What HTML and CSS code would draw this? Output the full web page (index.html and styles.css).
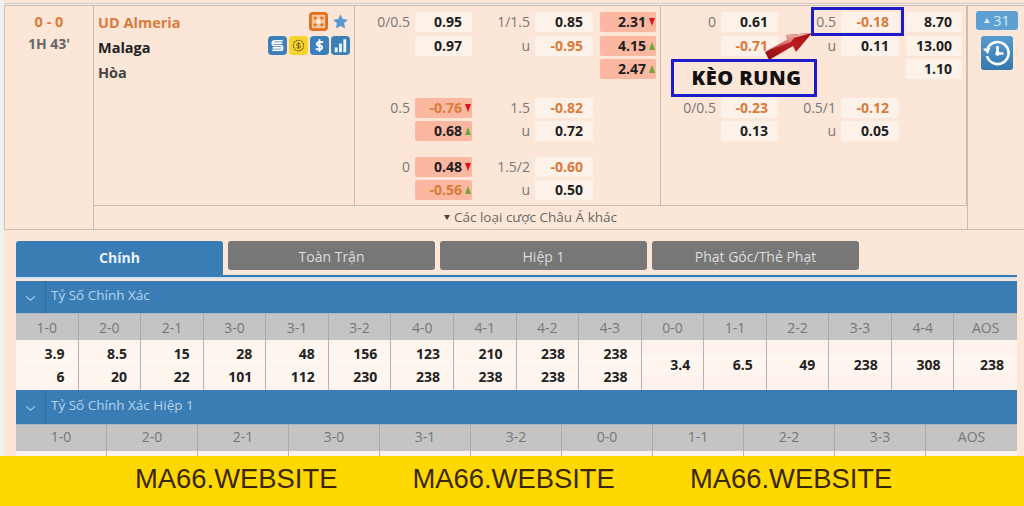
FILE: index.html
```html
<!DOCTYPE html>
<html lang="vi">
<head>
<meta charset="utf-8">
<title>Kèo rung</title>
<link rel="stylesheet" href="styles.css">
</head>
<body>
<div class="page">
  <div class="topstrip"></div>
  <section class="match">
    <div class="score"><div class="goals">0 - 0</div><div class="clock">1H 43'</div></div>
    <div class="body">
      <div class="markets">
        <div class="teams">
          <div class="team home">UD Almeria</div>
          <div class="team">Malaga</div>
          <div class="team draw">Hòa</div>
          <div class="iconrow first">
            <svg class="ic" viewBox="0 0 20 20"><rect x="1.5" y="1.5" width="17" height="17" rx="2.5" fill="#f6c79f" stroke="#e2701f" stroke-width="3"/><path d="M5 5h3v3H5zM12 5h3v3h-3zM5 12h3v3H5zM12 12h3v3h-3z" fill="#e2701f"/><path d="M8 8l4 4M12 8l-4 4" stroke="#fff3e6" stroke-width="1.8"/></svg>
            <svg class="star" viewBox="0 0 20 20"><path d="M10 1.5l2.6 5.7 6.200.7-4.600 4.200 1.300 6.100L10 15.200l-5.500 3 1.300-6.100L1.200 7.900l6.200-.7z" fill="#5a9ad2"/></svg>
          </div>
          <div class="iconrow second">
            <svg class="ic" viewBox="0 0 20 20"><rect width="20" height="20" rx="4" fill="#3b80b8"/><path d="M15.5 5H7a2.500 2.500 0 0 0 0 5h6a2.500 2.500 0 0 1 0 5H4.500M5 7.500h10M5 12.500h10" fill="none" stroke="#fff" stroke-width="1.7"/></svg>
            <svg class="ic" viewBox="0 0 20 20"><rect width="20" height="20" rx="4" fill="#f6d32d"/><circle cx="10" cy="10" r="5.5" fill="none" stroke="#6b5a10" stroke-width="1.1" stroke-dasharray="2 .8"/><path d="M12 8H9a1 1 0 0 0 0 2.200h2a1 1 0 0 1 0 2.200H8M10 6.500v7" fill="none" stroke="#6b5a10" stroke-width=".9"/></svg>
            <svg class="ic" viewBox="0 0 20 20"><rect width="20" height="20" rx="4" fill="#3b80b8"/><path d="M14 6.400H8.600a2 2 0 0 0 0 3.800h2.800a2 2 0 0 1 0 3.800H6M10 3.500v13" fill="none" stroke="#fff" stroke-width="2"/></svg>
            <svg class="ic" viewBox="0 0 20 20"><rect width="20" height="20" rx="4" fill="#3b80b8"/><path d="M4 12h3v5H4zM8.500 8h3v9h-3zM13 3.500h3V17h-3z" fill="#fff" opacity=".92"/></svg>
          </div>
        </div>
        <div class="panel">
          <div class="group g1">
            <span class="lb">0/0.5</span><span class="v">0.95</span><span class="lb">1/1.5</span><span class="v">0.85</span><span class="v x hot">2.31<i class="dn"></i></span>
            <span class="lb"></span><span class="v">0.97</span><span class="lb">u</span><span class="v neg">-0.95</span><span class="v x hot">4.15<i class="up"></i></span>
            <span class="lb"></span><span class="v none"></span><span class="lb"></span><span class="v none"></span><span class="v x hot">2.47<i class="up"></i></span>
          </div>
          <div class="group g2">
            <span class="lb">0.5</span><span class="v neg hot">-0.76<i class="dn"></i></span><span class="lb">1.5</span><span class="v neg">-0.82</span><span class="v x none"></span>
            <span class="lb"></span><span class="v hot">0.68<i class="up"></i></span><span class="lb">u</span><span class="v">0.72</span><span class="v x none"></span>
          </div>
          <div class="group">
            <span class="lb">0</span><span class="v hot">0.48<i class="dn"></i></span><span class="lb">1.5/2</span><span class="v neg">-0.60</span><span class="v x none"></span>
            <span class="lb"></span><span class="v neg hot">-0.56<i class="up"></i></span><span class="lb">u</span><span class="v">0.50</span><span class="v x none"></span>
          </div>
        </div>
        <div class="panel">
          <div class="group g1">
            <span class="lb">0</span><span class="v">0.61</span><span class="lb">0.5</span><span class="v neg">-0.18</span><span class="v x">8.70</span>
            <span class="lb"></span><span class="v neg">-0.71</span><span class="lb">u</span><span class="v">0.11</span><span class="v x">13.00</span>
            <span class="lb"></span><span class="v none"></span><span class="lb"></span><span class="v none"></span><span class="v x">1.10</span>
          </div>
          <div class="group g2">
            <span class="lb">0/0.5</span><span class="v neg">-0.23</span><span class="lb">0.5/1</span><span class="v neg">-0.12</span><span class="v x none"></span>
            <span class="lb"></span><span class="v">0.13</span><span class="lb">u</span><span class="v">0.05</span><span class="v x none"></span>
          </div>
        </div>
      </div>
      <div class="more"><span class="caret"></span>Các loại cược Châu Á khác</div>
    </div>
    <aside class="side">
      <div class="badge"><span class="badgecaret"></span>31</div>
      <div class="history">
        <svg viewBox="0 0 32 34" width="32" height="34"><path d="M6.600 12.500A11 11 0 1 1 6 20" fill="none" stroke="#fff" stroke-width="2.6"/><path d="M2.500 11.500l7.500 1.500-4.500 5z" fill="#fff" transform="rotate(-20 6 14)"/><path d="M16.500 10v7.500h6" fill="none" stroke="#fff" stroke-width="2.6"/><circle cx="16.500" cy="17.500" r="2.2" fill="#fff"/></svg>
      </div>
    </aside>
  </section>

  <div class="detail">
    <nav class="tabs">
      <div class="tab active">Chính</div>
      <div class="tab">Toàn Trận</div>
      <div class="tab">Hiệp 1</div>
      <div class="tab">Phạt Góc/Thẻ Phạt</div>
    </nav>
    <div class="rule"></div>
    <div class="bar"><span class="chev"><svg viewBox="0 0 12 8" width="11" height="7"><path d="M1 1.500l5 4.500 5-4.500" fill="none" stroke="#a9cbe6" stroke-width="1.3"/></svg></span><span class="bartitle">Tỷ Số Chính Xác</span></div>
    <div class="heads h16">
      <span>1-0</span><span>2-0</span><span>2-1</span><span>3-0</span><span>3-1</span><span>3-2</span><span>4-0</span><span>4-1</span><span>4-2</span><span>4-3</span><span>0-0</span><span>1-1</span><span>2-2</span><span>3-3</span><span>4-4</span><span>AOS</span>
    </div>
    <div class="vals h16">
      <div class="c"><b>3.9</b><b>6</b></div>
      <div class="c"><b>8.5</b><b>20</b></div>
      <div class="c"><b>15</b><b>22</b></div>
      <div class="c"><b>28</b><b>101</b></div>
      <div class="c"><b>48</b><b>112</b></div>
      <div class="c"><b>156</b><b>230</b></div>
      <div class="c"><b>123</b><b>238</b></div>
      <div class="c"><b>210</b><b>238</b></div>
      <div class="c"><b>238</b><b>238</b></div>
      <div class="c"><b>238</b><b>238</b></div>
      <div class="c one"><b>3.4</b></div>
      <div class="c one"><b>6.5</b></div>
      <div class="c one"><b>49</b></div>
      <div class="c one"><b>238</b></div>
      <div class="c one"><b>308</b></div>
      <div class="c one"><b>238</b></div>
    </div>
    <div class="bar second"><span class="chev"><svg viewBox="0 0 12 8" width="11" height="7"><path d="M1 1.500l5 4.500 5-4.500" fill="none" stroke="#a9cbe6" stroke-width="1.3"/></svg></span><span class="bartitle">Tỷ Số Chính Xác Hiệp 1</span></div>
    <div class="heads h11">
      <span>1-0</span><span>2-0</span><span>2-1</span><span>3-0</span><span>3-1</span><span>3-2</span><span>0-0</span><span>1-1</span><span>2-2</span><span>3-3</span><span>AOS</span>
    </div>
    <div class="vals h11">
      <div class="c"></div><div class="c"></div><div class="c"></div><div class="c"></div><div class="c"></div><div class="c"></div><div class="c"></div><div class="c"></div><div class="c"></div><div class="c"></div><div class="c"></div>
    </div>
  </div>

  <div class="mark-box"></div>
  <svg class="mark-arrow" viewBox="0 0 50 30" width="50" height="30">
    <defs>
      <linearGradient id="ag" x1="0" y1="1" x2="1" y2="0"><stop offset="0" stop-color="#8e0f12"/><stop offset=".55" stop-color="#bb1f22"/><stop offset="1" stop-color="#a80c10"/></linearGradient>
      <linearGradient id="ah" x1="0" y1="0" x2="0" y2="1"><stop offset="0" stop-color="#eab8ab"/><stop offset="1" stop-color="#c23a3c"/></linearGradient>
    </defs>
    <path d="M5 28L1 20 24 8 22 3 48 1 32 20 29 14z" fill="url(#ag)"/>
    <path d="M3 19L24 7 22 3 48 1 30 6 27 10z" fill="url(#ah)"/>
  </svg>
  <div class="mark-label">KÈO RUNG</div>
</div>
<footer class="banner">
  <span>MA66.WEBSITE</span><span>MA66.WEBSITE</span><span>MA66.WEBSITE</span>
</footer>
</body>
</html>
```

FILE: styles.css
```css
* { box-sizing: border-box; }
html, body { margin: 0; padding: 0; }
body {
  width: 1024px;
  height: 506px;
  overflow: hidden;
  background: #f1f1f1;
  font-family: "Open Sans", "Noto Sans", sans-serif;
  font-size: 14px;
}
.page {
  position: relative;
  height: 456px;
  overflow: hidden;
  margin-left: 4px;
  background: #fce6d8;
}
.topstrip {
  height: 4px;
  border-bottom: 1px solid #d8c8bb;
  background: #fce6d8;
  box-shadow: 0 1px 0 #eee;
  margin-bottom: 1px;
}
.match {
  display: flex;
  height: 225px;
  border-top: 1px solid #cdbfb3;
  border-left: 1px solid #cdbfb3;
  border-bottom: 1px solid #cdbdb0;
}
.score {
  width: 89px;
  flex: none;
  text-align: center;
  border-right: 1px solid #cdbdb0;
  padding-top: 6px;
}
.goals { color: #d97b3a; font-weight: 700; font-size: 14.5px; line-height: 20px; }
.clock { color: #666; font-weight: 700; font-size: 14px; line-height: 20px; margin-top: 2px; }
.body { width: 873px; flex: none; display: flex; flex-direction: column; }
.markets { display: flex; height: 200px; border-bottom: 1px solid #cdbdb0; }
.teams {
  position: relative;
  width: 261px;
  flex: none;
  padding: 4px 0 0 4px;
  border-right: 1px solid #cdbdb0;
}
.team { font-weight: 700; font-size: 14.5px; line-height: 25px; color: #222; }
.team.home { color: #d97b3a; }
.team.draw { color: #444; }
.iconrow { position: absolute; display: flex; align-items: center; gap: 2px; }
.iconrow.first { top: 6px; right: 5px; gap: 4px; }
.iconrow.second { top: 30px; right: 4px; }
.ic { width: 19px; height: 19px; display: block; }
.star { width: 17px; height: 17px; display: block; }
.panel { width: 306px; flex: none; padding: 6px 0 0 1px; border-right: 1px solid #cdbdb0; }
.group {
  display: grid;
  grid-template-columns: 54px 57px 53px 58px 57px;
  grid-auto-rows: 20px;
  column-gap: 5px;
  row-gap: 3.5px;
}
.g1 { margin-bottom: 18.5px; }
.g2 { margin-bottom: 15.5px; }
.lb { text-align: right; color: #777; font-size: 14px; line-height: 20px; }
.v {
  position: relative;
  display: block;
  background: #fdf2ea;
  border-radius: 2px;
  text-align: right;
  padding-right: 10px;
  font-weight: 700;
  font-size: 14px;
  line-height: 20px;
  color: #1e1e1e;
}
.v.neg { color: #d97b3a; }
.v.hot { background: #fbb7a0; }
.v.none { background: none; }
.v.x { margin-left: 2px; width: 56px; }
.v i { position: absolute; right: 1px; top: 6px; width: 0; height: 0; border-left: 3.5px solid transparent; border-right: 3.5px solid transparent; }
.v i.dn { border-top: 8px solid #e0141a; }
.v i.up { border-bottom: 8px solid #6fa83a; }
.more { height: 23px; text-align: center; line-height: 22px; font-size: 13.5px; color: #666; }
.caret {
  display: inline-block;
  width: 0;
  height: 0;
  margin-right: 4px;
  vertical-align: 2px;
  border-left: 3px solid transparent;
  border-right: 3px solid transparent;
  border-top: 5px solid #444;
}
.side { flex: 1; border-left: 1px solid #cdbdb0; padding: 5px 0 0 8px; }
.badge {
  width: 42px;
  height: 19px;
  background: #5e9fd4;
  border-radius: 3px;
  color: #d7e8f6;
  font-size: 14.5px;
  line-height: 19px;
  text-align: center;
}
.badgecaret {
  display: inline-block;
  width: 0;
  height: 0;
  margin-right: 3px;
  vertical-align: 3px;
  border-left: 3px solid transparent;
  border-right: 3px solid transparent;
  border-bottom: 5px solid #d7e8f6;
}
.history {
  margin: 6px 0 0 5px;
  width: 32px;
  height: 34px;
  border-radius: 3px;
  background: linear-gradient(#579bd0, #3678ae);
}
.history svg { display: block; }
.detail { width: 1001px; margin-left: 12px; padding-top: 11px; }
.tabs { display: flex; gap: 5px; align-items: flex-start; height: 34px; }
.tab {
  width: 207px;
  height: 29px;
  border-radius: 3px;
  background: #777;
  color: #ddd;
  text-align: center;
  font-size: 14px;
  line-height: 32px;
}
.tab.active {
  height: 34px;
  background: #3a7db5;
  border-radius: 3px 3px 0 0;
  color: #e8f1f8;
  font-weight: 700;
  line-height: 33px;
}
.rule { height: 6px; border-top: 2px solid #3a7db5; border-bottom: 2px solid #fbe5d7; background: #cfe5f5; }
.bar { height: 32px; background: #3a7db5; display: flex; align-items: center; }
.bar.second { height: 34px; }
.chev { width: 30px; height: 100%; flex: none; border-right: 1px solid #2e6a9d; display: flex; align-items: center; justify-content: center; padding-top: 3px; }
.bartitle { color: #b7d4ec; font-size: 13.5px; padding: 0 0 4px 5px; }
.heads { display: grid; background: #c4c4c4; height: 27px; border-top: 1px solid #a9b6c0; }
.heads span { text-align: center; color: #777; font-size: 14px; line-height: 27px; border-right: 1px solid #aaa; }
.heads span:last-child { border-right: 0; }
.h16 { grid-template-columns: repeat(16, 1fr); }
.h11 { grid-template-columns: repeat(11, 1fr); }
.h11 span { line-height: 24px; }
.vals { display: grid; height: 50px; background: #fdf3ec; }
.c { border-right: 1px solid #bdb3ab; display: flex; flex-direction: column; justify-content: center; gap: 3px; padding: 0 1px; }
.c:last-child { border-right: 0; }
.c b { display: block; background: #fff6ef; text-align: right; padding-right: 12px; font-size: 14px; line-height: 20px; color: #222; }
.mark-box {
  position: absolute;
  left: 807px;
  top: 7px;
  width: 93px;
  height: 29px;
  border: 3px solid #1c1ccb;
}
.mark-arrow { position: absolute; left: 760px; top: 32px; }
.mark-label {
  position: absolute;
  left: 667px;
  top: 59px;
  width: 146px;
  height: 38px;
  border: 3px solid #1c1ccb;
  background: #fce6d8;
  color: #111;
  font-weight: 800;
  font-size: 20px;
  letter-spacing: .5px;
  line-height: 32px;
  text-align: center;
  padding-left: 5px;
}
.banner {
  height: 50px;
  background: #ffd800;
  display: flex;
  gap: 75px;
  padding: 0 0 5px 135px;
  align-items: center;
  color: #3a2708;
  font-family: "Liberation Sans", Arial, sans-serif;
  font-size: 27.4px;
  line-height: 44px;
}
```
